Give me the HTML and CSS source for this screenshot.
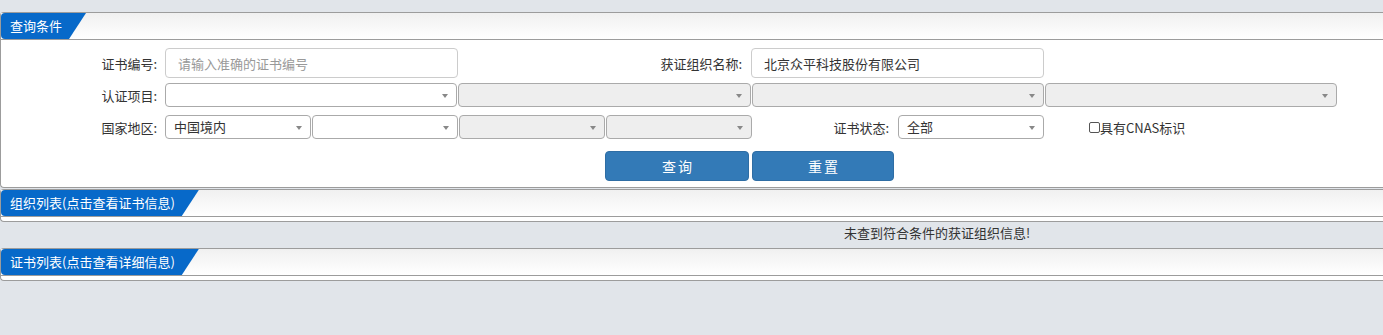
FILE: index.html
```html
<!DOCTYPE html>
<html lang="zh-CN">
<head>
  <meta charset="UTF-8" />
  <title>证书查询</title>
  <link rel="stylesheet" href="styles.css">
</head>
<body>
  <div class="panel first">
    <div class="panel-head"><span class="tab">查询条件</span></div>
    <div class="panel-body form">
      <div class="row r1">
        <label class="lbl">证书编号:</label>
        <input class="txt" type="text" placeholder="请输入准确的证书编号">
        <label class="lbl lbl2">获证组织名称:</label>
        <input class="txt" type="text" value="北京众平科技股份有限公司">
      </div>
      <div class="row r2">
        <label class="lbl">认证项目:</label>
        <div class="sel w292"></div>
        <div class="sel w293 off"></div>
        <div class="sel w292 off"></div>
        <div class="sel w292 off"></div>
      </div>
      <div class="row r3">
        <label class="lbl">国家地区:</label>
        <div class="sel w146">中国境内</div>
        <div class="sel w146"></div>
        <div class="sel w146 off"></div>
        <div class="sel w146 off"></div>
        <label class="lbl lbl3">证书状态:</label>
        <div class="sel w146">全部</div>
        <label class="chk"><span class="box"></span>具有CNAS标识</label>
      </div>
      <div class="row btns">
        <button class="btn b1">查询</button>
        <button class="btn b2">重置</button>
      </div>
    </div>
  </div>

  <div class="panel">
    <div class="panel-head"><span class="tab">组织列表(点击查看证书信息)</span></div>
    <div class="panel-body empty"></div>
  </div>
  <div class="msg">未查到符合条件的获证组织信息!</div>

  <div class="panel">
    <div class="panel-head"><span class="tab">证书列表(点击查看详细信息)</span></div>
    <div class="panel-body empty"></div>
  </div>
</body>
</html>
```

FILE: styles.css
```css
body {
  margin: 0;
  background-color: #e1e5ea;
  font-family: "Noto Sans CJK SC", "Liberation Sans", sans-serif;
  font-size: 13px;
  color: #333;
  overflow: hidden;
}
.panel {
  margin-top: 1px;
  border: 1px solid #9c9c9c;
  border-right: none;
  border-radius: 4px 0 0 4px;
  background-color: #fff;
}
.panel.first {
  margin-top: 12px;
}
.panel-head {
  height: 26px;
  border-bottom: 1px solid #9c9c9c;
  background: linear-gradient(#f0f0f0, #fff);
}
.tab {
  display: inline-block;
  height: 26px;
  line-height: 26px;
  padding: 0 24px 0 9px;
  background-color: #0769c9;
  color: #fff;
  border-radius: 4px 0 0 4px;
  clip-path: polygon(0 0, 100% 0, calc(100% - 17px) 100%, 0 100%);
}
.panel-body.empty {
  height: 4px;
}
.form {
  padding: 8px 0 6px;
}
.row {
  display: flex;
  align-items: center;
}
.r2 {
  margin-top: 5px;
}
.r3 {
  margin-top: 8px;
}
.lbl {
  width: 156px;
  margin-right: 8px;
  text-align: right;
}
.lbl2 {
  width: 284px;
  margin-right: 9px;
}
.lbl3 {
  width: 136px;
  margin-right: 9px;
}
.txt {
  box-sizing: border-box;
  width: 293px;
  height: 30px;
  padding: 0 12px;
  border: 1px solid #ccc;
  border-radius: 4px;
  font-family: inherit;
  font-size: 13px;
  color: #333;
}
.txt::placeholder {
  color: #999;
}
.sel {
  position: relative;
  box-sizing: border-box;
  height: 24px;
  line-height: 22px;
  padding-left: 8px;
  margin-right: 1px;
  border: 1px solid #aaa;
  border-radius: 4px;
  background-color: #fff;
}
.sel::after {
  content: "";
  position: absolute;
  right: 8px;
  top: 10px;
  border-left: 3px solid transparent;
  border-right: 3px solid transparent;
  border-top: 4px solid #888;
}
.sel.off {
  background-color: #eee;
}
.w292 { width: 292px; }
.w293 { width: 293px; }
.w146 { width: 146px; }
.chk {
  display: flex;
  align-items: center;
  margin-left: 44px;
}
.box {
  box-sizing: border-box;
  width: 11px;
  height: 11px;
  border: 1px solid #555;
  border-radius: 2px;
  background: #fff;
}
.btns {
  margin-top: 12px;
  padding-left: 604px;
}
.btn {
  height: 30px;
  padding: 0;
  border: 1px solid #2e6da4;
  border-radius: 4px;
  background-color: #337ab7;
  color: #fff;
  font-family: inherit;
  font-size: 14px;
  letter-spacing: 2px;
  text-indent: 2px;
}
.b1 {
  width: 144px;
  margin-right: 3px;
}
.b2 {
  width: 142px;
}
.msg {
  height: 25px;
  line-height: 22px;
  padding-left: 844px;
}
```
